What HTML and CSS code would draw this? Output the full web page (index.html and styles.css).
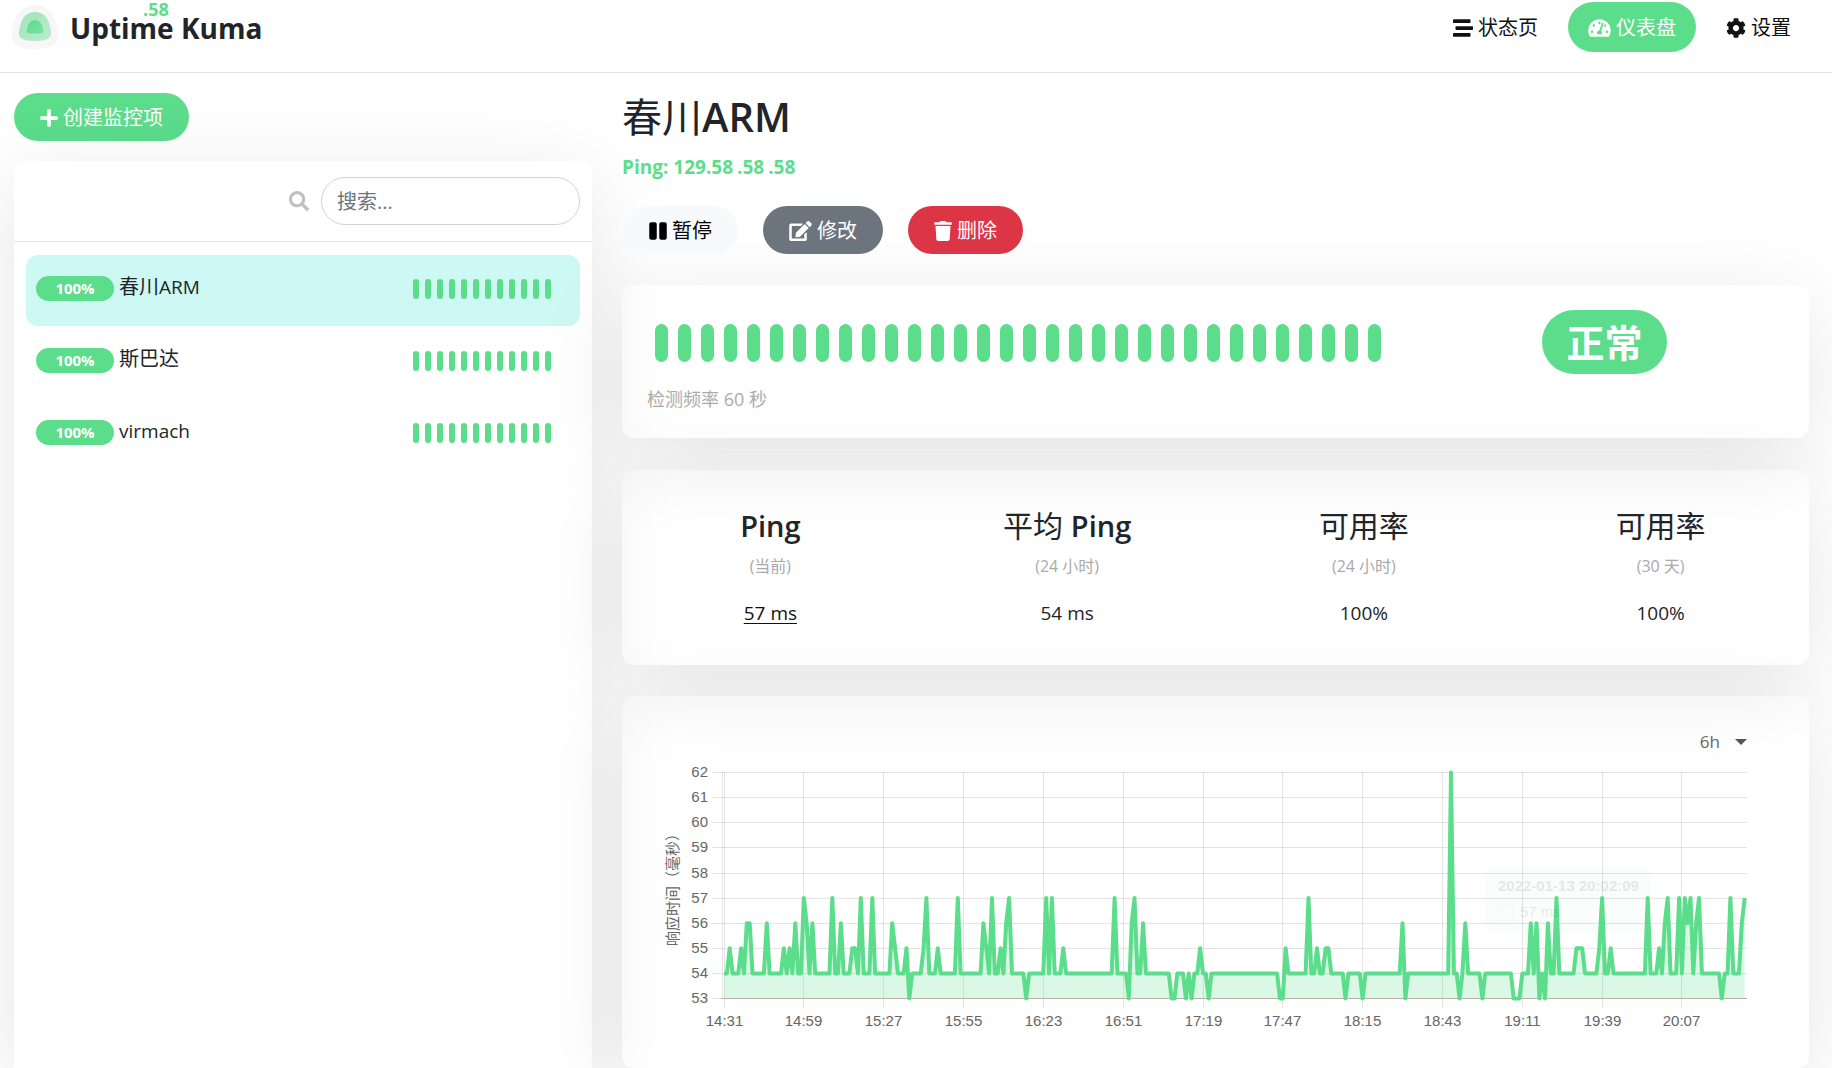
FILE: index.html
```html
<!DOCTYPE html>
<html lang="zh-CN">
<head>
<meta charset="utf-8">
<meta name="viewport" content="width=device-width, initial-scale=1">
<title>Uptime Kuma</title>
<link rel="stylesheet" href="styles.css">
</head>
<body>
<header class="topbar">
  <a class="brand" href="#">
    <svg class="brand-logo" viewBox="0 0 48 44" aria-hidden="true">
      <defs>
        <linearGradient id="mid" x1="0" y1="0" x2="1" y2="1"><stop offset="0" stop-color="#9fe4b9"/><stop offset="1" stop-color="#bdebce"/></linearGradient>
        <linearGradient id="core" x1="0" y1="0" x2="1" y2="1"><stop offset="0" stop-color="#5cdd8b"/><stop offset="1" stop-color="#78e2a0"/></linearGradient>
      </defs>
      <path fill="#f7f7f7" d="M24 0C36 0 42 8 45 17C48 27 49 33 45 38C41 43 33 44 24 44C15 44 7 43 3 38C-1 33 0 27 3 17C6 8 12 0 24 0Z"/>
      <path fill="url(#mid)" d="M24 7C32 7 36 12 38 18C40 25 41 29 39 32C37 35 31 36 24 36C17 36 11 35 9 32C7 29 8 25 10 18C12 12 16 7 24 7Z"/>
      <path fill="url(#core)" d="M24 15C29 15 31 19 32 24C33 28.500 32 28.600 24 28.600C16 28.600 15 28.500 16 24C17 19 19 15 24 15Z"/>
    </svg>
    <span class="brand-name">Uptime Kuma</span>
    <span class="float-tag">.58</span>
  </a>
  <nav class="nav">
    <a class="nav-link" href="#"><svg class="icon" viewBox="0 0 512 512" aria-hidden="true"><path d="M16 128h416c8.840 0 16-7.160 16-16V48c0-8.840-7.160-16-16-16H16C7.160 32 0 39.160 0 48v64c0 8.840 7.160 16 16 16zm480 80H80c-8.840 0-16 7.160-16 16v64c0 8.840 7.160 16 16 16h416c8.840 0 16-7.160 16-16v-64c0-8.840-7.160-16-16-16zm-64 176H16c-8.840 0-16 7.160-16 16v64c0 8.840 7.160 16 16 16h416c8.840 0 16-7.160 16-16v-64c0-8.840-7.160-16-16-16z"/></svg>状态页</a>
    <a class="nav-link active" href="#" aria-current="page"><svg class="icon wide" viewBox="0 0 576 512" aria-hidden="true"><path d="M288 32C128.940 32 0 160.940 0 320c0 52.800 14.250 102.260 39.060 144.800 5.610 9.620 16.300 15.200 27.440 15.200h443c11.140 0 21.830-5.580 27.440-15.200C561.750 422.260 576 372.800 576 320c0-159.060-128.940-288-288-288zm0 64c14.710 0 26.580 10.130 30.320 23.650-1.110 2.260-2.640 4.230-3.450 6.670l-9.220 27.670c-5.130 3.490-10.970 6.010-17.640 6.010-17.670 0-32-14.330-32-32S270.330 96 288 96zM96 384c-17.670 0-32-14.330-32-32s14.330-32 32-32 32 14.330 32 32-14.330 32-32 32zm48-160c-17.670 0-32-14.330-32-32s14.330-32 32-32 32 14.330 32 32-14.330 32-32 32zm246.770-72.410l-61.330 184C343.130 347.330 352 364.540 352 384c0 11.720-3.380 22.550-8.880 32H232.880c-5.500-9.450-8.880-20.280-8.880-32 0-33.940 26.500-61.430 59.900-63.590l61.340-184.010c4.170-12.560 17.730-19.450 30.360-15.170 12.570 4.190 19.350 17.790 15.170 30.360zm14.660 57.200l15.520-46.550c3.470-1.290 7.130-2.230 11.050-2.230 17.670 0 32 14.330 32 32s-14.330 32-32 32c-11.380-.010-20.890-6.280-26.570-15.220zM480 384c-17.670 0-32-14.330-32-32s14.330-32 32-32 32 14.330 32 32-14.330 32-32 32z"/></svg>仪表盘</a>
    <a class="nav-link" href="#"><svg class="icon" viewBox="0 0 512 512" aria-hidden="true"><path d="M487.400 315.700l-42.600-24.600c4.300-23.200 4.300-47 0-70.200l42.600-24.600c4.900-2.800 7.100-8.600 5.500-14-11.100-35.600-30-67.800-54.700-94.600-3.800-4.100-10-5.100-14.800-2.300L380.800 110c-17.900-15.400-38.500-27.300-60.800-35.100V25.800c0-5.600-3.900-10.500-9.400-11.700-36.700-8.200-74.300-7.800-109.200 0-5.500 1.200-9.400 6.100-9.400 11.700V75c-22.200 7.900-42.800 19.800-60.800 35.100L88.700 85.500c-4.900-2.800-11-1.900-14.800 2.300-24.700 26.700-43.600 58.900-54.700 94.600-1.700 5.400.6 11.200 5.500 14L67.300 221c-4.300 23.200-4.300 47 0 70.200l-42.600 24.600c-4.900 2.800-7.100 8.600-5.500 14 11.100 35.600 30 67.800 54.700 94.600 3.800 4.100 10 5.100 14.800 2.300l42.600-24.600c17.900 15.400 38.500 27.300 60.800 35.100v49.200c0 5.600 3.900 10.500 9.400 11.700 36.700 8.200 74.300 7.800 109.200 0 5.500-1.200 9.400-6.100 9.400-11.700v-49.200c22.200-7.900 42.800-19.800 60.800-35.100l42.600 24.600c4.900 2.800 11 1.900 14.800-2.300 24.700-26.700 43.600-58.900 54.700-94.600 1.500-5.500-.7-11.300-5.600-14.100zM256 336c-44.100 0-80-35.900-80-80s35.900-80 80-80 80 35.900 80 80-35.900 80-80 80z"/></svg>设置</a>
  </nav>
</header>

<main class="layout">
  <aside class="side">
    <button class="btn btn-primary" type="button"><svg class="icon narrow" viewBox="0 0 448 512" aria-hidden="true"><path d="M416 208H272V64c0-17.670-14.330-32-32-32h-32c-17.670 0-32 14.330-32 32v144H32c-17.670 0-32 14.330-32 32v32c0 17.670 14.330 32 32 32h144v144c0 17.670 14.330 32 32 32h32c17.670 0 32-14.330 32-32V304h144c17.670 0 32-14.330 32-32v-32c0-17.670-14.330-32-32-32z"/></svg>创建监控项</button>
    <section class="box monitors">
      <form class="search">
        <label class="search-label" for="q" aria-label="搜索"><svg class="icon" viewBox="0 0 512 512" aria-hidden="true"><path d="M505 442.700L405.300 343c-4.500-4.500-10.600-7-17-7H372c27.600-35.300 44-79.700 44-128C416 93.100 322.900 0 208 0S0 93.100 0 208s93.100 208 208 208c48.300 0 92.700-16.400 128-44v16.300c0 6.400 2.500 12.500 7 17l99.700 99.700c9.400 9.400 24.600 9.400 33.900 0l28.300-28.300c9.400-9.400 9.400-24.600.1-34zM208 336c-70.700 0-128-57.200-128-128 0-70.700 57.200-128 128-128 70.700 0 128 57.200 128 128 0 70.700-57.200 128-128 128z"/></svg></label>
        <input class="search-input" id="q" type="text" placeholder="搜索...">
      </form>
      <div class="list">
        <a class="item selected" href="#"><span class="pill">100%</span><span class="item-name">春川<span class="latin">ARM</span></span><span class="beats small" data-count="12"></span></a>
        <a class="item" href="#"><span class="pill">100%</span><span class="item-name">斯巴达</span><span class="beats small" data-count="12"></span></a>
        <a class="item" href="#"><span class="pill">100%</span><span class="item-name"><span class="latin">virmach</span></span><span class="beats small" data-count="12"></span></a>
      </div>
    </section>
  </aside>

  <section class="detail">
    <h1 class="title">春川<span class="title-latin">ARM</span></h1>
    <p class="target"><span>Ping: 129.58</span><span>.58</span><span>.58</span></p>
    <div class="actions">
      <button class="btn btn-light" type="button"><svg class="icon narrow" viewBox="0 0 448 512" aria-hidden="true"><path d="M144 479H48c-26.500 0-48-21.500-48-48V79c0-26.500 21.500-48 48-48h96c26.500 0 48 21.500 48 48v352c0 26.500-21.500 48-48 48zm304-48V79c0-26.500-21.500-48-48-48h-96c-26.500 0-48 21.500-48 48v352c0 26.500 21.500 48 48 48h96c26.500 0 48-21.500 48-48z"/></svg>暂停</button>
      <button class="btn btn-secondary" type="button"><svg class="icon wide" viewBox="0 0 576 512" aria-hidden="true"><path d="M402.600 83.200l90.200 90.200c3.800 3.800 3.800 10 0 13.800L274.400 405.600l-92.800 10.300c-12.400 1.400-22.900-9.100-21.500-21.500l10.300-92.800L388.800 83.200c3.800-3.800 10-3.800 13.800 0zm162-22.900l-48.800-48.800c-15.200-15.200-39.900-15.200-55.200 0l-35.400 35.400c-3.800 3.800-3.800 10 0 13.800l90.200 90.200c3.800 3.800 10 3.800 13.800 0l35.400-35.400c15.200-15.300 15.200-40 0-55.200zM384 346.200V448H64V128h229.800c3.200 0 6.200-1.300 8.500-3.500l40-40c7.600-7.600 2.200-20.500-8.500-20.500H48C21.500 64 0 85.500 0 112v352c0 26.500 21.500 48 48 48h352c26.500 0 48-21.500 48-48V306.200c0-10.700-12.900-16-20.500-8.500l-40 40c-2.200 2.300-3.500 5.300-3.500 8.500z"/></svg>修改</button>
      <button class="btn btn-danger" type="button"><svg class="icon narrow" viewBox="0 0 448 512" aria-hidden="true"><path d="M432 32H312l-9.400-18.700A24 24 0 0 0 281.100 0H166.800a23.720 23.720 0 0 0-21.400 13.300L136 32H16A16 16 0 0 0 0 48v32a16 16 0 0 0 16 16h416a16 16 0 0 0 16-16V48a16 16 0 0 0-16-16zM53.200 467a48 48 0 0 0 47.900 45h245.800a48 48 0 0 0 47.900-45L416 128H32z"/></svg>删除</button>
    </div>

    <div class="box status">
      <div class="status-main">
        <div class="beats" data-count="32"></div>
        <p class="interval">检测频率 60 秒</p>
      </div>
      <div class="status-side"><span class="status-badge">正常</span></div>
    </div>

    <div class="box stats">
      <div class="stat"><h2 class="stat-name"><span class="stat-latin">Ping</span></h2><p class="stat-note">(当前)</p><a class="stat-value" href="#">57 ms</a></div>
      <div class="stat"><h2 class="stat-name">平均 <span class="stat-latin">Ping</span></h2><p class="stat-note">(24 小时)</p><span class="stat-value">54 ms</span></div>
      <div class="stat"><h2 class="stat-name">可用率</h2><p class="stat-note">(24 小时)</p><span class="stat-value">100%</span></div>
      <div class="stat"><h2 class="stat-name">可用率</h2><p class="stat-note">(30 天)</p><span class="stat-value">100%</span></div>
    </div>

    <div class="box chart-box">
      <div class="chart-head"><button class="period" type="button">6h<span class="caret"></span></button></div>
      <svg class="chart" id="chart" viewBox="0 0 1137 278" role="img" aria-label="响应时间"></svg>
    </div>
  </section>
</main>
<script src="app.js"></script>
</body>
</html>
```
FILE: styles.css
```css
* { box-sizing: border-box; }

body {
  margin: 0;
  background: #fff;
  color: #212529;
  font-family: "Open Sans", "Noto Sans CJK SC", sans-serif;
  font-size: 20px;
  line-height: 30px;
}

h1, h2, p { margin: 0; font-weight: 400; }
a { color: inherit; text-decoration: none; }

.icon { width: 20px; height: 20px; fill: currentColor; flex: none; }
.icon.wide { width: 23px; }
.icon.narrow { width: 18px; }

/* header */
.topbar {
  display: flex;
  justify-content: space-between;
  align-items: flex-start;
  padding: 2px 21px 20px 11px;
  border-bottom: 1px solid #dee2e6;
}
.brand { position: relative; display: flex; align-items: center; gap: 11px; height: 50px; }
.brand-logo { width: 48px; height: 44px; }
.brand-name { padding-top: 2px; font-size: 28px; font-weight: 700; }
.float-tag {
  position: absolute;
  left: 132px;
  top: -8px;
  color: #5cdd8b;
  font-size: 18px;
  font-weight: 700;
  line-height: 30px;
}
.nav { display: flex; gap: 10px; }
.nav-link {
  display: flex;
  align-items: center;
  gap: 5px;
  padding: 11px 20px 9px;
  border-radius: 25px;
  color: #111;
}
.nav-link.active { background: #5cdd8b; color: #fff; }

/* page grid */
.layout {
  display: grid;
  grid-template-columns: 578fr 1187fr;
  gap: 30px;
  padding: 20px 23px 0 14px;
}
.side { display: flex; flex-direction: column; align-items: flex-start; gap: 20px; }

.btn {
  display: flex;
  align-items: center;
  gap: 5px;
  height: 48px;
  padding: 2px 26px 0;
  border: 0;
  border-radius: 24px;
  font: inherit;
}
.btn-primary { background: #5cdd8b; color: #fff; }
.btn-light { background: #f8f9fa; color: #000; }
.btn-secondary { background: #6c757d; color: #fff; }
.btn-danger { background: #dc3545; color: #fff; }

.box { border-radius: 12px; box-shadow: 0 19px 88px rgba(0, 0, 0, 0.1); }

/* monitor list */
.monitors { align-self: stretch; flex: 1; border-radius: 12px 12px 0 0; }
.search {
  display: flex;
  justify-content: flex-end;
  align-items: center;
  gap: 12px;
  padding: 16px 12px;
  border-bottom: 1px solid #dee2e6;
}
.search-label { display: flex; color: #c0c0c0; }
.search-input {
  width: 259px;
  height: 48px;
  padding: 0 15px;
  border: 1px solid #ced4da;
  border-radius: 24px;
  background: none;
  color: #212529;
  font: inherit;
}
.search-input::placeholder { color: #6c757d; opacity: 1; }
.list { padding: 13px 12px; }
.item {
  display: flex;
  align-items: center;
  gap: 5px;
  height: 71px;
  margin-bottom: 1px;
  padding: 0 29px 4px 10px;
  border-radius: 12px;
}
.item.selected { background: #cdf8f4; }
.pill {
  width: 78px;
  border-radius: 13px;
  background: #5cdd8b;
  color: #fff;
  font-size: 15px;
  font-weight: 700;
  line-height: 25px;
  text-align: center;
}
.item-name { padding-bottom: 4px; }
.latin { font-size: 19px; }

.beats { display: flex; gap: 10px; }
.beat { width: 13px; height: 38px; border-radius: 7px; background: #5cdd8b; }
.beats.small { gap: 6px; margin-left: auto; }
.beats.small .beat { width: 6px; height: 20px; border-radius: 3px; }

/* monitor detail */
.title { font-size: 40px; line-height: 48px; }
.title-latin { font-weight: 600; }
.target { display: flex; gap: 4px; margin-top: 11px; color: #5cdd8b; font-size: 19px; font-weight: 700; }
.actions { display: flex; gap: 25px; margin: 24px 0 31px; padding-left: 1px; }

.status { display: grid; grid-template-columns: 2fr 1fr; height: 153px; padding: 25px 10px; }
.status-main { padding: 14px 15px 0 23px; }
.interval { margin: 22px 0 0 -8px; color: #aaa; font-size: 18px; }
.status-side { text-align: center; }
.status-badge {
  display: inline-block;
  padding: 1px 24px 0;
  border-radius: 32px;
  background: #5cdd8b;
  color: #fff;
  font-size: 38px;
  font-weight: 700;
  line-height: 63px;
}

.stats { display: grid; grid-template-columns: repeat(4, 1fr); margin: 32px 0 31px; padding: 37px 0 35px; text-align: center; }
.stat { margin: 0 -2px; }
.stat-name { font-size: 30px; line-height: 38px; }
.stat-latin { font-size: 29px; font-weight: 600; }
.stat-note { margin: 8px 0 18px; color: #aaa; font-size: 16px; line-height: 26px; }
.stat-value { display: block; font-size: 19px; line-height: 33px; }
a.stat-value { color: #111; text-decoration: underline; text-underline-offset: 3px; }

.chart-box { padding: 31px 25px 25px; }
.chart-head { display: flex; justify-content: flex-end; margin-bottom: 8px; padding-right: 37px; }
.period {
  display: flex;
  align-items: center;
  gap: 15px;
  padding: 0;
  border: 0;
  background: none;
  color: #666;
  font: inherit;
  font-size: 17px;
  line-height: 30px;
}
.caret { border: 6px solid transparent; border-top-color: #555; border-bottom: 0; }
.chart { display: block; width: 100%; height: auto; overflow: visible; }
.chart text { fill: #666; font: 15px "Liberation Sans", "Noto Sans CJK SC", sans-serif; }
.chart .grid { stroke: #000; stroke-opacity: 0.1; }
.chart .zero { stroke: #b9b2a2; }
.chart .area { fill: #5cdd8b; fill-opacity: 0.22; }
.chart .line { fill: none; stroke: #5cdd8b; stroke-width: 4; stroke-linejoin: round; }
.chart .tip { opacity: 0.1; }
.chart .tip .tip-title { fill: #222; font-weight: 700; }
.chart .tip .tip-text { fill: #222; }
```
FILE: app.js
```js
// Heartbeat bars
document.querySelectorAll('.beats').forEach(function (el) {
  for (let i = 0; i < Number(el.dataset.count); i++) {
    const beat = document.createElement('span');
    beat.className = 'beat';
    el.appendChild(beat);
  }
});

// Ping by minute since 14:31; every minute that is not listed is 54 ms
const MINUTES = 358;
const BASE = 54;
const pings = {
  53: [65, 106, 142, 157, 158, 162, 164, 170, 195, 196, 218, 224, 239, 258, 266, 277, 278, 279, 286, 288, 350],
  55: [2, 6, 21, 23, 45, 46, 60, 64, 70, 75, 92, 97, 119, 167, 197, 208, 211, 212, 299, 300, 301, 307, 311, 328],
  56: [8, 9, 15, 25, 29, 31, 41, 59, 91, 99, 143, 147, 238, 260, 283, 285, 289, 330, 338, 341, 357],
  57: [28, 38, 48, 52, 71, 82, 94, 100, 113, 115, 137, 144, 205, 292, 308, 324, 331, 335, 337, 339, 342, 353, 358],
  62: [255]
};
const series = new Array(MINUTES + 1).fill(BASE);
Object.keys(pings).forEach(v => pings[v].forEach(i => { series[i] = Number(v); }));

const left = 77, right = 1100, bottom = 233.5, stepY = 25.1, stepX = 2.851;
const x = i => (left + i * stepX).toFixed(1);
const y = v => (bottom - (v - 53) * stepY).toFixed(1);
const snap = n => Math.floor(n) + 0.5;
let out = '';

for (let v = 53; v <= 62; v++) {
  const gy = snap(y(v));
  out += `<line class="grid" x1="65" x2="${right}" y1="${gy}" y2="${gy}"/>`;
  out += `<text x="61" y="${gy + 4}" text-anchor="end">${v}</text>`;
}
out += `<line class="grid" x1="75.5" x2="75.5" y1="7" y2="${bottom}"/>`;
for (let m = 0; m <= 336; m += 28) {
  const gx = snap(x(m));
  const t = 14 * 60 + 31 + m;
  const label = Math.floor(t / 60) + ':' + String(t % 60).padStart(2, '0');
  out += `<line class="grid" x1="${gx}" x2="${gx}" y1="7" y2="243"/>`;
  out += `<text x="${gx}" y="261" text-anchor="middle">${label}</text>`;
}
out += '<text transform="translate(31 121) rotate(-90)" text-anchor="middle">响应时间（毫秒）</text>';

const pts = series.map((v, i) => x(i) + ',' + y(v)).join(' ');
out += `<polygon class="area" points="${x(0)},${bottom} ${pts} ${x(MINUTES)},${bottom}"/>`;
out += `<line class="zero" x1="74" x2="${right}" y1="${bottom}" y2="${bottom}"/>`;
out += `<polyline class="line" points="${pts}"/>`;
out += '<g class="tip"><rect x="838" y="101" width="166" height="67" rx="8" fill="#5cdd8b" fill-opacity="0.3"/>' +
  '<text class="tip-title" x="851" y="126">2022-01-13 20:02:09</text>' +
  '<rect x="851" y="140" width="15" height="15" fill="none" stroke="#5cdd8b"/>' +
  '<text class="tip-text" x="873" y="152">57 ms</text></g>';
document.getElementById('chart').innerHTML = out;
```
